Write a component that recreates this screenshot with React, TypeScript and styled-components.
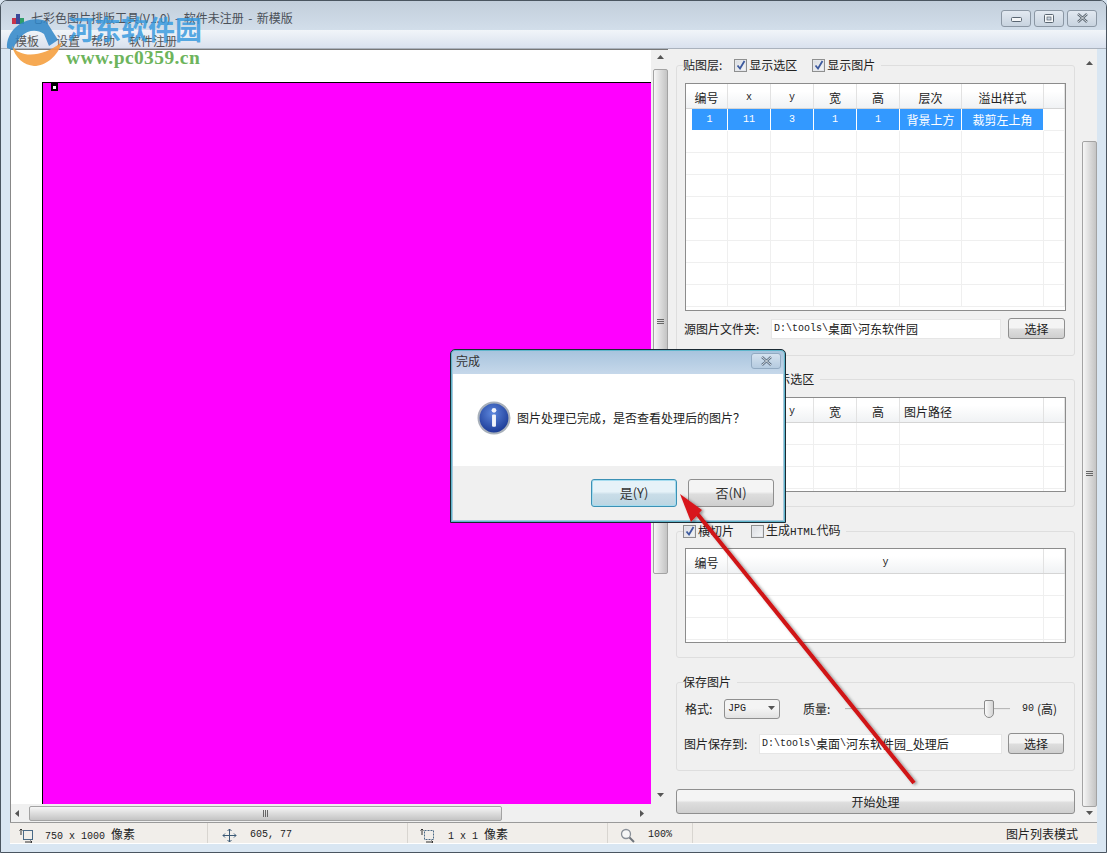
import React from 'react'
import styled, { createGlobalStyle, css } from 'styled-components'

const UI_FONT = `"Noto Sans CJK SC", "Liberation Sans", sans-serif`

const GlobalStyle = createGlobalStyle`
  html, body {
    margin: 0;
    padding: 0;
    overflow: hidden;
    background: #d8e4f0;
  }
  * {
    box-sizing: border-box;
  }
`

// -------------Window frame----------
const Window = styled.div`
  position: relative;
  width: 1107px;
  height: 853px;
  display: flex;
  flex-direction: column;
  overflow: hidden;
  font-family: ${UI_FONT};
  font-size: 12px;
  line-height: 16px;
  color: #222;
  background: #d9e6f2;
  border: 1px solid #4a5560;
  border-radius: 7px 7px 0 0;
`

const TitleBar = styled.div`
  height: 29px;
  flex: none;
  display: flex;
  align-items: center;
  padding-left: 9px;
  background: linear-gradient(#c2cedb, #d2deea);
`

const AppIcon = styled.svg`
  width: 16px;
  height: 16px;
  flex: none;
  margin-top: 4px;
`

const TitleText = styled.span`
  margin-left: 5px;
  margin-top: 5px;
  color: #4a5058;
  font-size: 12px;
  word-spacing: 1.75px;
`

const WindowButtons = styled.div`
  margin-left: auto;
  margin-right: 9px;
  margin-top: 5px;
  display: flex;
  gap: 3px;
`

const CaptionButton = styled.div`
  width: 30px;
  height: 17px;
  display: flex;
  align-items: center;
  justify-content: center;
  border: 1px solid #8b97a4;
  border-radius: 3px;
  background: linear-gradient(#e2e9f1, #c8d3df);
`

const MenuBar = styled.div`
  height: 19px;
  flex: none;
  display: flex;
  padding: 3px 0 0 14px;
  align-items: center;
  background: linear-gradient(#f1f5f9, #d9e1ee);
  border-bottom: 1px solid #aab2bd;
`

const MenuItem = styled.span<{ $gap: number }>`
  margin-right: ${p => p.$gap}px;
  color: #555;
`

const Client = styled.div`
  flex: 1;
  min-height: 0;
  display: flex;
  margin: 0 9px;
  border-left: 1px solid #888;
`

// -------------Canvas side----------
const CanvasPane = styled.div`
  width: 657px;
  flex: none;
  display: flex;
  flex-direction: column;
`

const CanvasRow = styled.div`
  flex: 1;
  min-height: 0;
  display: flex;
  border-top: 1px solid #777;
`

const Viewport = styled.div`
  flex: 1;
  min-width: 0;
  overflow: hidden;
  background: #fff;
  padding: 32px 0 0 31px;
`

const Artboard = styled.div`
  position: relative;
  height: 1000px;
  background: #ff00ff;
  border-top: 1px solid #000;
  border-left: 1px solid #000;
`

const SelectionMark = styled.div`
  position: absolute;
  left: 8px;
  top: 0;
  width: 7px;
  height: 8px;
  background: #000;
  &::after {
    content: '';
    position: absolute;
    left: 2px;
    top: 3px;
    width: 3px;
    height: 3px;
    background: #fff;
  }
`

// -------------Scrollbars----------
const VBar = styled.div<{ $top: number; $width: number }>`
  width: ${p => p.$width}px;
  flex: none;
  margin-top: ${p => p.$top}px;
  padding-left: ${p => p.$width - 15}px;
  display: flex;
  flex-direction: column;
  background: #f0f0f0;
`

const HBar = styled.div`
  height: 18px;
  flex: none;
  display: flex;
  align-items: stretch;
  background: #f0f0f0;
`

const ArrowBox = styled.div<{ $size: number }>`
  flex: 0 0 ${p => p.$size}px;
  display: flex;
  align-items: center;
  justify-content: center;
`

const Track = styled.div<{ $pad?: number }>`
  flex: 1;
  min-width: 0;
  min-height: 0;
  display: flex;
  flex-direction: column;
  padding-top: ${p => p.$pad || 0}px;
`

const HTrack = styled.div<{ $pad: number }>`
  flex: 1;
  display: flex;
  padding: 2px 0 1px ${p => p.$pad}px;
`

const VThumb = styled.div<{ $size?: number }>`
  ${p => (p.$size ? `height: ${p.$size}px;` : 'flex: 1;')}
  display: flex;
  align-items: center;
  justify-content: center;
  border: 1px solid #a3a3a3;
  border-radius: 2px;
  background: linear-gradient(90deg, #f6f6f6, #dcdcdc 50%, #c4c4c4);
`

const HThumb = styled.div<{ $size: number }>`
  width: ${p => p.$size}px;
  display: flex;
  align-items: center;
  justify-content: center;
  border: 1px solid #a3a3a3;
  border-radius: 2px;
  background: linear-gradient(#f6f6f6, #dcdcdc 50%, #c4c4c4);
`

const Grip = styled.span<{ $vertical?: boolean }>`
  width: ${p => (p.$vertical ? '7px' : '6px')};
  height: ${p => (p.$vertical ? '6px' : '7px')};
  background: repeating-linear-gradient(
    ${p => (p.$vertical ? '180deg' : '90deg')},
    #666 0,
    #666 1px,
    transparent 1px,
    transparent 2px
  );
`

// -------------Settings side----------
const SidePane = styled.div`
  flex: 1;
  min-width: 0;
  display: flex;
  background: #f0f0f0;
`

const SideContent = styled.div`
  flex: 1;
  min-width: 0;
  display: flex;
  flex-direction: column;
  padding: 8px 7px 0 8px;
`

const Group = styled.fieldset<{ $gap?: number; $height: number; $pad: number }>`
  margin: ${p => p.$gap || 0}px 0 0;
  padding: ${p => p.$pad}px 8px 0;
  min-width: 0;
  height: ${p => p.$height}px;
  flex: none;
  border: 1px solid #dedede;
  border-radius: 3px;
`

const Legend = styled.legend`
  padding: 0 6px 0 0;
  margin-left: -2px;
  display: flex;
  align-items: center;
  height: 16px;
  white-space: nowrap;
`

const LegendLabel = styled.span<{ $gap: number }>`
  margin-right: ${p => p.$gap}px;
`

const CheckLabel = styled.span<{ $gap?: number }>`
  display: inline-flex;
  align-items: center;
  gap: 2px;
  margin-right: ${p => p.$gap || 0}px;
`

const CheckBox = styled.span`
  width: 13px;
  height: 13px;
  flex: none;
  display: inline-flex;
  align-items: center;
  justify-content: center;
  border: 1px solid #8e8f8f;
  background: linear-gradient(135deg, #d8dbe0, #f6f7f8);
  box-shadow: inset 0 0 0 1px #e4e6ea;
`

const TableBox = styled.div<{ $height: number }>`
  height: ${p => p.$height}px;
  overflow: hidden;
  background: #fff;
  border: 1px solid #8c8c8c;
`

const TableRow = styled.div<{ $columns: string; $head?: boolean }>`
  display: grid;
  grid-template-columns: ${p => p.$columns};
  height: ${p => (p.$head ? 25 : 22)}px;
  ${p =>
    p.$head &&
    css`
      background: linear-gradient(#fff 30%, #f0f2f4);
      border-bottom: 1px solid #d5d5d5;
    `}
`

const TableCell = styled.div<{ $head?: boolean; $left?: boolean; $selected?: boolean; $inset?: boolean }>`
  display: flex;
  align-items: center;
  justify-content: ${p => (p.$left ? 'flex-start' : 'center')};
  padding-left: ${p => (p.$left ? 4 : 0)}px;
  padding-top: ${p => (p.$head ? 3 : 0)}px;
  border-right: 1px solid ${p => (p.$head ? '#e2e2e2' : '#efefef')};
  border-bottom: ${p => (p.$head ? 'none' : '1px solid #efefef')};
  ${p =>
    p.$selected &&
    css`
      background: #3399ff;
      color: #fff;
      border-right-color: #fff;
      border-bottom: none;
      margin-bottom: 1px;
    `}
  ${p => p.$inset && 'margin-left: 6px;'}
`

const Latin = styled.span<{ $size?: number }>`
  font-family: 'Liberation Mono', monospace;
  font-size: ${p => p.$size || 10}px;
`

const FormRow = styled.div<{ $gap?: number; $indent?: number }>`
  display: flex;
  align-items: center;
  margin-top: ${p => p.$gap || 0}px;
  margin-left: ${p => p.$indent || 0}px;
  white-space: nowrap;
`

const FieldLabel = styled.span<{ $width: number; $before?: number }>`
  width: ${p => p.$width}px;
  margin-left: ${p => p.$before || 0}px;
  flex: none;
`

const TextField = styled.div<{ $width: number }>`
  width: ${p => p.$width}px;
  height: 20px;
  flex: none;
  display: flex;
  align-items: center;
  padding-left: 2px;
  background: #fff;
  border: 1px solid #e6e6e6;
  overflow: hidden;
`

const PushButton = styled.div<{ $width?: number; $height?: number; $default?: boolean; $before?: number }>`
  width: ${p => (p.$width ? `${p.$width}px` : '100%')};
  height: ${p => p.$height || 21}px;
  margin-left: ${p => p.$before || 0}px;
  flex: none;
  display: flex;
  align-items: center;
  justify-content: center;
  border: 1px solid ${p => (p.$default ? '#3c91b5' : '#8f8f8f')};
  border-radius: 3px;
  background: ${p =>
    p.$default
      ? 'linear-gradient(#e6f2f8 45%, #c9dde8 55%, #bcd5e2)'
      : 'linear-gradient(#f4f4f4 45%, #dddddd 55%, #cfcfcf)'};
  ${p => p.$default && 'box-shadow: inset 0 0 0 1px #a5dcef;'}
`

const SelectBox = styled.div`
  width: 56px;
  height: 20px;
  flex: none;
  display: flex;
  align-items: center;
  justify-content: space-between;
  padding: 0 4px 0 3px;
  border: 1px solid #8f8f8f;
  border-radius: 3px;
  background: linear-gradient(#f4f4f4 45%, #e2e2e2);
`

const SliderTrack = styled.div`
  position: relative;
  width: 165px;
  height: 2px;
  margin: 0 12px 0 0;
  flex: none;
  background: #b8b8b8;
  border-bottom: 1px solid #e8e8e8;
`

const SliderThumb = styled.div`
  position: absolute;
  left: 139px;
  top: -8px;
  width: 10px;
  height: 18px;
  background: linear-gradient(90deg, #fafafa, #d4d4d4);
  border: 1px solid #8a8a8a;
  border-radius: 2px 2px 5px 5px;
`

const QualityText = styled.span`
  margin-left: 3px;
`

const StartRow = styled.div`
  margin-top: 18px;
`

// -------------Status bar----------
const StatusBar = styled.div`
  height: 22px;
  flex: none;
  margin: 0 9px 8px;
  display: flex;
  align-items: center;
  background: #f1eeea;
  border-top: 1px solid #9a9a9a;
  border-bottom: 1px solid #fff;
`

const StatusCell = styled.div<{ $width: number; $pad: number; $gap: number }>`
  width: ${p => p.$width}px;
  height: 100%;
  flex: none;
  display: flex;
  align-items: center;
  gap: ${p => p.$gap}px;
  padding: 4px 0 0 ${p => p.$pad}px;
  border-right: 1px solid #d8d5d0;
`

const StatusMode = styled.div`
  margin-left: auto;
  margin-right: 19px;
  padding-top: 2px;
`

const StatusIcon = styled.svg`
  width: 15px;
  height: 15px;
  flex: none;
`

// -------------Message dialog----------
const Dialog = styled.div`
  position: absolute;
  left: 449px;
  top: 348px;
  width: 336px;
  height: 174px;
  display: flex;
  flex-direction: column;
  background: #a9c8dc;
  border: 1px solid #1c2a33;
  border-radius: 5px 5px 0 0;
  box-shadow: inset 0 0 0 1px #5fb6cc;
  padding: 1px 2px 2px;
`

const DialogTitle = styled.div`
  height: 23px;
  flex: none;
  display: flex;
  align-items: center;
  justify-content: space-between;
  padding: 0 2px 3px 3px;
  background: linear-gradient(#a8c4de, #c6d8ea);
  border-radius: 4px 4px 0 0;
  color: #333;
`

const DialogClose = styled.div`
  width: 30px;
  height: 16px;
  display: flex;
  align-items: center;
  justify-content: center;
  border: 1px solid #92aac2;
  border-radius: 3px;
  background: linear-gradient(#d5e2ef, #b5cbe0);
`

const DialogBody = styled.div`
  height: 92px;
  flex: none;
  display: flex;
  align-items: center;
  gap: 6px;
  padding: 0 0 4px 24px;
  background: #fff;
`

const DialogIcon = styled.svg`
  width: 34px;
  height: 34px;
  flex: none;
`

const DialogFooter = styled.div`
  flex: 1;
  display: flex;
  justify-content: flex-end;
  gap: 11px;
  padding: 13px 9px 0 0;
  background: #f0f0f0;
`

const ButtonLabel = styled.span`
  font-size: 13px;
  color: #333;
`

// -------------Overlays: watermark and red arrow----------
const OverlaySvg = styled.svg`
  position: absolute;
  left: -1px;
  top: -1px;
  width: 1107px;
  height: 853px;
  pointer-events: none;
`

const WatermarkTitle = styled.div`
  position: absolute;
  left: 66px;
  top: 11px;
  font-size: 27px;
  line-height: 34px;
  font-weight: 700;
  color: rgba(52, 152, 222, 0.82);
  white-space: nowrap;
  pointer-events: none;
`

const WatermarkUrl = styled.div`
  position: absolute;
  left: 65px;
  top: 47px;
  font-family: 'Liberation Serif', serif;
  font-size: 19.5px;
  line-height: 20px;
  font-weight: 700;
  letter-spacing: 0.4px;
  color: #6db45c;
  white-space: nowrap;
  pointer-events: none;
`

// -------------Data----------
const layerColumns = '42px 43px 43px 43px 43px 62px 82px 1fr'
const pathColumns = '42px 43px 43px 43px 43px 144px 1fr'
const sliceColumns = '42px 316px 1fr'

const Arrow = ({ dir }: { dir: 'up' | 'down' | 'left' | 'right' }) => {
  const points = {
    up: '0,4 3.5,0 7,4',
    down: '0,0 3.5,4 7,0',
    left: '4,0 0,3.5 4,7',
    right: '0,0 4,3.5 0,7'
  }[dir]
  return (
    <svg width='7' height='7' viewBox='0 0 7 7'>
      <polygon points={points} fill='#555' />
    </svg>
  )
}

const Tick = () => (
  <svg width='10' height='10' viewBox='0 0 10 10'>
    <path d='M1.5 5.5 L4 8.5 L8.5 1' fill='none' stroke='#3d5a9e' strokeWidth='1.8' />
  </svg>
)

const Check = ({ checked, children, gap }: { checked?: boolean; children: React.ReactNode; gap?: number }) => (
  <CheckLabel $gap={gap}>
    <CheckBox>{checked && <Tick />}</CheckBox>
    <span>{children}</span>
  </CheckLabel>
)

const CloseGlyph = ({ color }: { color: string }) => (
  <svg width='13' height='10' viewBox='0 0 13 10'>
    <path d='M2 1 L11 9 M11 1 L2 9' stroke={color} strokeWidth='2.4' />
    <path d='M2 1 L11 9 M11 1 L2 9' stroke='#f4f6f8' strokeWidth='0.8' />
  </svg>
)

interface ITableProps {
  columns: string
  height: number
  head: { label: React.ReactNode; left?: boolean }[]
  rows: number
  selected?: React.ReactNode[]
}

const DataTable = ({ columns, height, head, rows, selected }: ITableProps) => {
  const blank = Array.from({ length: rows })
  return (
    <TableBox $height={height}>
      <TableRow $columns={columns} $head>
        {head.map((h, i) => (
          <TableCell key={i} $head $left={h.left}>
            {h.label}
          </TableCell>
        ))}
      </TableRow>
      {selected && (
        <TableRow $columns={columns}>
          {head.map((_, i) => (
            <TableCell key={i} $selected={i < head.length - 1} $inset={i === 0}>
              {selected[i]}
            </TableCell>
          ))}
        </TableRow>
      )}
      {blank.map((_, r) => (
        <TableRow key={r} $columns={columns}>
          {head.map((_, i) => (
            <TableCell key={i} />
          ))}
        </TableRow>
      ))}
    </TableBox>
  )
}

const CropIcon = ({ dashed }: { dashed?: boolean }) => (
  <StatusIcon viewBox='0 0 15 15'>
    <rect
      x='4.5'
      y='2.5'
      width='9'
      height='9'
      fill='none'
      stroke='#4a6a86'
      strokeDasharray={dashed ? '2 1' : undefined}
    />
    <path d='M2 1 V7 M0.5 2.5 L2 1 L3.5 2.5 M6 14 H13 M11.5 12.5 L13 14 L11.5 15' fill='none' stroke='#333' />
  </StatusIcon>
)

const App = () => {
  return (
    <>
      <GlobalStyle />
      <Window>
        <TitleBar>
          <AppIcon viewBox='0 0 16 16'>
            <rect x='2' y='8' width='4' height='6' fill='#c8334a' />
            <rect x='6' y='4' width='4' height='10' fill='#3a4a9a' />
            <rect x='10' y='8' width='4' height='6' fill='#2f9e6a' />
          </AppIcon>
          <TitleText>七彩色图片排版工具(V1.0) - 软件未注册 - 新模版</TitleText>
          <WindowButtons>
            <CaptionButton>
              <svg width='11' height='7' viewBox='0 0 11 7'>
                <rect x='0.5' y='2.5' width='10' height='4' rx='1' fill='#f4f6f8' stroke='#5a6672' />
              </svg>
            </CaptionButton>
            <CaptionButton>
              <svg width='10' height='9' viewBox='0 0 10 9'>
                <rect x='0.5' y='0.5' width='9' height='8' rx='1' fill='#f4f6f8' stroke='#5a6672' />
                <rect x='3' y='3' width='4' height='3' fill='#c8d3df' stroke='#5a6672' strokeWidth='0.7' />
              </svg>
            </CaptionButton>
            <CaptionButton>
              <CloseGlyph color='#5a6672' />
            </CaptionButton>
          </WindowButtons>
        </TitleBar>

        <MenuBar>
          <MenuItem $gap={17}>模板</MenuItem>
          <MenuItem $gap={11}>设置</MenuItem>
          <MenuItem $gap={14}>帮助</MenuItem>
          <MenuItem $gap={0}>软件注册</MenuItem>
        </MenuBar>

        <Client>
          <CanvasPane>
            <CanvasRow>
              <Viewport>
                <Artboard>
                  <SelectionMark />
                </Artboard>
              </Viewport>
              <VBar $top={0} $width={17}>
                <ArrowBox $size={16}>
                  <Arrow dir='up' />
                </ArrowBox>
                <Track $pad={3}>
                  <VThumb $size={505}>
                    <Grip $vertical />
                  </VThumb>
                </Track>
                <ArrowBox $size={15}>
                  <Arrow dir='down' />
                </ArrowBox>
              </VBar>
            </CanvasRow>
            <HBar>
              <ArrowBox $size={15}>
                <Arrow dir='left' />
              </ArrowBox>
              <HTrack $pad={3}>
                <HThumb $size={473}>
                  <Grip />
                </HThumb>
              </HTrack>
              <ArrowBox $size={50}>
                <Arrow dir='right' />
              </ArrowBox>
            </HBar>
          </CanvasPane>

          <SidePane>
            <SideContent>
              <Group $height={299} $pad={10}>
                <Legend>
                  <LegendLabel $gap={12}>贴图层:</LegendLabel>
                  <Check checked gap={15}>显示选区</Check>
                  <Check checked>显示图片</Check>
                </Legend>
                <DataTable
                  columns={layerColumns}
                  height={228}
                  rows={8}
                  head={[
                    { label: '编号' },
                    { label: <Latin>x</Latin> },
                    { label: <Latin>y</Latin> },
                    { label: '宽' },
                    { label: '高' },
                    { label: '层次' },
                    { label: '溢出样式' },
                    { label: '' }
                  ]}
                  selected={[
                    <Latin key='a'>1</Latin>,
                    <Latin key='b'>11</Latin>,
                    <Latin key='c'>3</Latin>,
                    <Latin key='d'>1</Latin>,
                    <Latin key='e'>1</Latin>,
                    '背景上方',
                    '裁剪左上角',
                    ''
                  ]}
                />
                <FormRow $gap={7} $indent={-1}>
                  <FieldLabel $width={87}>源图片文件夹:</FieldLabel>
                  <TextField $width={230}>
                    <Latin>D:\tools\</Latin>桌面<Latin>\</Latin>河东软件园
                  </TextField>
                  <PushButton $width={57} $before={7}>选择</PushButton>
                </FormRow>
              </Group>

              <Group $gap={15} $height={136} $pad={10}>
                <Legend>
                  <LegendLabel $gap={5}>图片列表层:</LegendLabel>
                  <Check checked>显示选区</Check>
                </Legend>
                <DataTable
                  columns={pathColumns}
                  height={95}
                  rows={4}
                  head={[
                    { label: '编号' },
                    { label: <Latin>x</Latin> },
                    { label: <Latin>y</Latin> },
                    { label: '宽' },
                    { label: '高' },
                    { label: '图片路径', left: true },
                    { label: '' }
                  ]}
                />
              </Group>

              <Group $gap={16} $height={135} $pad={9}>
                <Legend>
                  <Check checked gap={17}>横切片</Check>
                  <Check>
                    生成<Latin $size={11}>HTML</Latin>代码
                  </Check>
                </Legend>
                <DataTable
                  columns={sliceColumns}
                  height={95}
                  rows={4}
                  head={[{ label: '编号' }, { label: <Latin>y</Latin> }, { label: '' }]}
                />
              </Group>

              <Group $gap={16} $height={97} $pad={9}>
                <Legend>保存图片</Legend>
                <FormRow>
                  <FieldLabel $width={39}>格式:</FieldLabel>
                  <SelectBox>
                    <Latin>JPG</Latin>
                    <Arrow dir='down' />
                  </SelectBox>
                  <FieldLabel $width={42} $before={23}>质量:</FieldLabel>
                  <SliderTrack>
                    <SliderThumb />
                  </SliderTrack>
                  <Latin>90</Latin>
                  <QualityText>(高)</QualityText>
                </FormRow>
                <FormRow $gap={14} $indent={-1}>
                  <FieldLabel $width={75}>图片保存到:</FieldLabel>
                  <TextField $width={243}>
                    <Latin>D:\tools\</Latin>桌面<Latin>\</Latin>河东软件园_处理后
                  </TextField>
                  <PushButton $width={56} $before={6}>选择</PushButton>
                </FormRow>
              </Group>

              <StartRow>
                <PushButton $height={25}>开始处理</PushButton>
              </StartRow>
            </SideContent>

            <VBar $top={8} $width={15}>
              <ArrowBox $size={15}>
                <Arrow dir='up' />
              </ArrowBox>
              <Track $pad={69}>
                <VThumb>
                  <Grip $vertical />
                </VThumb>
              </Track>
              <ArrowBox $size={15}>
                <Arrow dir='down' />
              </ArrowBox>
            </VBar>
          </SidePane>
        </Client>

        <StatusBar>
          <StatusCell $width={198} $pad={9} $gap={11}>
            <CropIcon />
            <span>
              <Latin>750 x 1000 </Latin>像素
            </span>
          </StatusCell>
          <StatusCell $width={200} $pad={14} $gap={13}>
            <StatusIcon viewBox='0 0 15 15'>
              <path
                d='M7.5 1 V14 M1 7.5 H14 M5.5 3 L7.5 1 L9.5 3 M5.5 12 L7.5 14 L9.5 12 M3 5.5 L1 7.5 L3 9.5 M12 5.5 L14 7.5 L12 9.5'
                fill='none'
                stroke='#3c5a76'
              />
            </StatusIcon>
            <Latin>605, 77</Latin>
          </StatusCell>
          <StatusCell $width={200} $pad={12} $gap={13}>
            <CropIcon dashed />
            <span>
              <Latin>1 x 1 </Latin>像素
            </span>
          </StatusCell>
          <StatusCell $width={85} $pad={12} $gap={13}>
            <StatusIcon viewBox='0 0 15 15'>
              <circle cx='6' cy='6' r='4.5' fill='#f6f6f6' stroke='#8a9098' strokeWidth='1.3' />
              <path d='M9.5 9.5 L14 14' stroke='#70757c' strokeWidth='2' />
            </StatusIcon>
            <Latin>100%</Latin>
          </StatusCell>
          <StatusMode>图片列表模式</StatusMode>
        </StatusBar>

        <Dialog>
          <DialogTitle>
            <span>完成</span>
            <DialogClose>
              <CloseGlyph color='#5f7286' />
            </DialogClose>
          </DialogTitle>
          <DialogBody>
            <DialogIcon viewBox='0 0 33 33'>
              <defs>
                <radialGradient id='infoFill' cx='45%' cy='35%' r='70%'>
                  <stop offset='0' stopColor='#5c86dc' />
                  <stop offset='1' stopColor='#15338f' />
                </radialGradient>
              </defs>
              <circle cx='16.5' cy='16.5' r='15' fill='url(#infoFill)' stroke='#a8b0ba' strokeWidth='2' />
              <circle cx='16.5' cy='9' r='2.3' fill='#f2f4fa' />
              <rect x='14.6' y='13' width='3.8' height='12' rx='1' fill='#f2f4fa' />
            </DialogIcon>
            <span>图片处理已完成，是否查看处理后的图片？</span>
          </DialogBody>
          <DialogFooter>
            <PushButton $width={86} $height={28} $default>
              <ButtonLabel>是(Y)</ButtonLabel>
            </PushButton>
            <PushButton $width={86} $height={28}>
              <ButtonLabel>否(N)</ButtonLabel>
            </PushButton>
          </DialogFooter>
        </Dialog>

        <WatermarkTitle>河东软件园</WatermarkTitle>
        <WatermarkUrl>www.pc0359.cn</WatermarkUrl>

        <OverlaySvg viewBox='0 0 1107 853'>
          <defs>
            <filter id='arrowShadow' x='-10%' y='-10%' width='120%' height='120%'>
              <feDropShadow dx='2' dy='1' stdDeviation='1.5' floodColor='#000' floodOpacity='0.4' />
            </filter>
          </defs>
          <path
            d='M7 48 C6 28 28 14 46 21 L58 40 L49 46 L44 34 C32 26 18 34 13 50 Z'
            fill='#2f86c8'
            fillOpacity='0.85'
          />
          <path
            d='M12 46 C20 58 42 58 62 42 C58 56 46 66 34 66 C24 65 15 58 12 46 Z'
            fill='#f5a040'
            fillOpacity='0.9'
          />
          <g filter='url(#arrowShadow)'>
            <line x1='914' y1='783' x2='695' y2='511' stroke='#d01216' strokeWidth='4' />
            <polygon points='680,494 702,510 691,522' fill='#d8141a' />
          </g>
        </OverlaySvg>
      </Window>
    </>
  )
}

export default App
